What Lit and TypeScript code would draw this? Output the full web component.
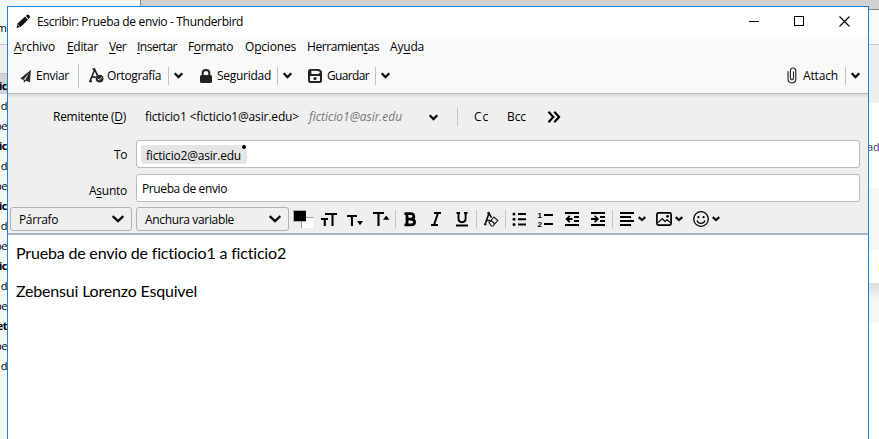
import { LitElement, html, svg, css } from "lit";
import { customElement, property } from "lit/decorators.js";

/* Text run whose tracking is adjusted to occupy a given width. */
@customElement("fit-text")
class FitText extends LitElement {
  @property({ type: Number }) w = 0;
  static styles = css`
    :host { display: inline-block; white-space: pre; }
    .run { display: inline-block; }
  `;
  firstUpdated() {
    const run = this.renderRoot.querySelector(".run") as HTMLElement;
    const n = (this.textContent || "").length;
    if (!this.w || !n) return;
    const natural = run.getBoundingClientRect().width;
    run.style.letterSpacing = (this.w - natural) / n + "px";
  }
  render() {
    return html`<span class="run"><slot></slot></span>`;
  }
}

const t = (w: number, a: string, u = "", b = "") =>
  html`<fit-text w=${w}>${a}${u ? html`<u>${u}</u>` : ""}${b}</fit-text>`;

const icon = (x: number, y: number, w: number, h: number, body: unknown) =>
  html`<svg class="icon" width=${w} height=${h} viewBox="${x} ${y} ${w} ${h}">${body}</svg>`;

const chevron = (w = 9, h = 7, s = 2.2) =>
  html`<svg class="icon" width=${w} height=${h} viewBox="0 0 ${w} ${h}">
    <path d="M.7 1.2 L${w / 2} ${h - 1.9} L${w - 0.7} 1.2" fill="none" stroke="#0c0c0c" stroke-width=${s} /></svg>`;

const pencil = icon(0, 0, 15, 15, svg`
  <path d="M0.5 14 L1.6 9.6 L9 2.6 L12 5.8 L4.8 12.8 Z" fill="#111"/>
  <path d="M9.8 1.9 L11.2 .7 Q12.2 .1 13.2 1.2 Q14.5 2.5 13.8 3.6 L12.7 5Z" fill="#111"/>
  <path d="M1.9 10.9 L3.7 12.5" stroke="#fff" stroke-width=".7"/>`);
const send = icon(0, 0, 12, 14, svg`
  <path d="M11 .8 L.2 9.6 L3.4 11 L8.6 4.6 L5 11.4 L9.9 13.2 Z" fill="#2b2b2b"/>
  <path d="M3.6 10.3 L3.9 13.8 L6.2 11.6" fill="#2b2b2b"/>`);
const spell = icon(0, 0, 16, 15, svg`
  <path d="M1 13.2 L5.7 1.5 L8.6 7.6 M2.6 9.2 H6.8 M3.6 1.2 H6.2 M.2 13.3 H3" fill="none" stroke="#222" stroke-width="1.7"/>
  <circle cx="10.6" cy="10.6" r="3.9" fill="#2b2b2b"/>
  <path d="M8.6 10.7 L10.1 12.1 L12.9 9.2" fill="none" stroke="#ddd" stroke-width="1"/>`);
const lock = icon(0, 0, 12, 14, svg`
  <path d="M2.7 7 V4 Q2.7 1.1 6 1.1 Q9.3 1.1 9.3 4 V7" fill="none" stroke="#222" stroke-width="2"/>
  <rect x="0" y="6" width="12" height="8" rx="1.5" fill="#222"/>`);
const save = icon(0, 0, 14, 14, svg`
  <path d="M2.3 1 H9.8 Q13 1.2 13 4 V11.7 Q13 13 11.7 13 H2.3 Q1 13 1 11.7 V2.3 Q1 1 2.3 1Z" fill="#f9f9f9" stroke="#222" stroke-width="2"/>
  <path d="M1 1 H3.5 V5 H11 V4 H13 V7 H1Z" fill="#222"/><rect x="3.6" y="1.8" width="5" height="2.3" fill="#f9f9f9"/>
  <circle cx="7" cy="9.6" r="1.6" fill="#222"/>`);
const clip = icon(0, 0, 10, 17, svg`
  <path d="M6.5 4.4 V10.8 Q6.5 12.7 5 12.7 Q3.4 12.7 3.4 10.8 V4.2 Q3.4 1 6 1 Q8.8 1 8.8 4.2 V11.6 Q8.8 15.9 5 15.9 Q1 15.9 1 11.6 V4.2" fill="none" stroke="#2b2b2b" stroke-width="1.2"/>`);

const swatch = icon(293, 209, 21, 20, svg`
  <rect x="301" y="217" width="12" height="11" fill="#fff"/><path d="M306 217.5 H313.5 M301.5 221 V228" stroke="#999"/>
  <rect x="293" y="210" width="13" height="12" fill="#aaa"/><rect x="294" y="211" width="12" height="10" fill="#000"/>`);
const tt = icon(320, 209, 18, 20, svg`
  <path d="M325 214 H337 M332.5 214 V226 M321 219 H328 M324.8 219 V226" stroke="#000" stroke-width="2.1" fill="none"/>`);
const tDown = icon(346, 209, 18, 20, svg`
  <path d="M347 216 H357 M352 216 V226" stroke="#000" stroke-width="2.1"/><path d="M357 221 H363 L360 225.3Z"/>`);
const tUp = icon(372, 209, 18, 20, svg`
  <path d="M373 213 H384 M378.5 213 V226" stroke="#000" stroke-width="2.1"/><path d="M383 219.8 H389.4 L386.2 215.5Z"/>`);
const bold = icon(403, 209, 14, 20, svg`
  <path d="M404.5 213.6 H410.5 Q413.8 213.6 413.8 216.4 Q413.8 219.2 410.5 219.2 H407 M410.5 219.2 Q414.6 219.2 414.6 222.2 Q414.6 224.8 411 224.8 H404.5 M407 213 V225" fill="none" stroke="#000" stroke-width="2.8"/>`);
const italic = icon(430, 209, 12, 20, svg`
  <path d="M434 213 H441 M431 225 H438 M438 213 L434 225" fill="none" stroke="#000" stroke-width="2"/>`);
const under = icon(455, 209, 14, 20, svg`
  <path d="M458.5 212 V218.5 Q458.5 222.2 462 222.2 Q465.6 222.2 465.6 218.5 V212 M456.5 213 H460 M464 213 H467.5" fill="none" stroke="#000" stroke-width="1.9"/><path d="M456 225.5 H468" stroke="#000" stroke-width="2"/>`);
const clear = icon(483, 209, 17, 20, svg`
  <path d="M485 224.5 L489 213.3 L491.5 217.6 M486 220.5 H490 M487.2 213 H490 M484 224.5 H486.5" fill="none" stroke="#111" stroke-width="1.7"/>
  <path d="M489 222.6 L494 217 L497.8 220.5 L492.8 226 H491.4Z M491 220.5 L495 224" fill="#efefef" stroke="#111" stroke-width="1.1"/>`);
const bullets = icon(512, 209, 15, 20, svg`
  <g fill="#000"><circle cx="514" cy="214" r="1.5"/><circle cx="514" cy="219.2" r="1.5"/><circle cx="514" cy="224.4" r="1.5"/></g>
  <path d="M518 214 H526 M518 219.2 H526 M518 224.5 H526" stroke="#000" stroke-width="2"/>`);
const numbers = icon(538, 209, 16, 20, svg`
  <text x="537.6" y="218" class="digit">1</text><text x="537.6" y="227" class="digit">2</text>
  <path d="M544 215 H553 M544 224 H553" stroke="#000" stroke-width="2"/>`);
const outdent = icon(565, 209, 15, 20, svg`
  <path d="M565 213 H579 M574 217 H579 M574 221 H579 M565 225 H579" stroke="#000" stroke-width="1.8"/>
  <path d="M566.5 219 H572.5 M569.8 215.8 L566.6 219 L569.8 222.2" fill="none" stroke="#000" stroke-width="1.8"/>`);
const indent = icon(591, 209, 15, 20, svg`
  <path d="M591 213 H605 M600 217 H605 M600 221 H605 M591 225 H605" stroke="#000" stroke-width="1.8"/>
  <path d="M591 219 H597.5 M594.6 215.8 L597.8 219 L594.6 222.2" fill="none" stroke="#000" stroke-width="1.8"/>`);
const align = icon(620, 209, 14, 20, svg`
  <path d="M620 213 H634 M620 217 H631 M620 221 H634 M620 225 H631" stroke="#000" stroke-width="2"/>`);
const image = icon(656, 209, 16, 20, svg`
  <rect x="656.9" y="212.9" width="14.2" height="12.2" rx="1.6" fill="none" stroke="#000" stroke-width="1.7"/>
  <path d="M658 222.6 L662.2 218.6 L665 221.4 L667 219.8 L670.4 222.6" fill="none" stroke="#000" stroke-width="1.1"/><circle cx="667.6" cy="216.3" r="1.4"/>`);
const smile = icon(693, 209, 16, 20, svg`
  <circle cx="701" cy="219" r="7.3" fill="none" stroke="#000" stroke-width="1.3"/>
  <circle cx="698.4" cy="217.2" r="1.1"/><circle cx="703.6" cy="217.2" r="1.1"/>
  <path d="M697 220.5 Q698.2 223.4 701 223.4 Q703.8 223.4 705 220.5" fill="none" stroke="#000" stroke-width="1.3"/>`);
const more = icon(0, 0, 14, 12, svg`
  <path d="M1.5 .8 L6.3 6 L1.5 11.2 M7.3 .8 L12.1 6 L7.3 11.2" fill="none" stroke="#000" stroke-width="2.1"/>`);

const sep = html`<i class="sep"></i>`;
const list = ["tic", "d", "be", "tic", "d", "be", "tic", "d", "be", "tic", "d", "be", "et", "be", "d"];

@customElement("app-root")
class AppRoot extends LitElement {
  static styles = css`
    :host {
      display: grid; grid-template-columns: 7px 862px 10px; width: 879px; height: 439px;
      overflow: hidden; background: #fff; color: #000;
      font: 12px/16px "Open Sans", "Noto Sans", sans-serif;
    }
    * { box-sizing: border-box; }
    u { text-decoration: underline; text-decoration-thickness: 1px; text-underline-offset: 1.5px; }
    .icon { display: block; flex: none; overflow: visible; }
    .digit { font: bold 8px "Liberation Sans", sans-serif; }

    .left { background: #f9f9f9; overflow: hidden; display: flex; flex-direction: column; }
    .left .tab { height: 45px; padding-top: 20px; border-bottom: 1px solid #c8c8c8; flex: none; display: flex; justify-content: flex-end; font-size: 11px; }
    .left .bar { height: 29px; background: #efefef; border-bottom: 1px solid #c4c4c4; flex: none; }
    .row { height: 20px; line-height: 23px; flex: none; display: flex; justify-content: flex-end; font-size: 11px; letter-spacing: -0.5px; }
    .row.bold { font-weight: 700; }
    .row.first { background: #d2d2d2; }

    .middle { display: flex; flex-direction: column; height: 439px; }
    .behind { height: 6px; flex: none; background: #d0d0d0; display: flex; }
    .behind b { width: 134px; background: #f9f9f9; border-right: 1px solid #888; }
    .window { height: 440px; flex: none; border: 1px solid #1883d7; background: #fff; }
    .title { height: 30px; display: grid; grid-template-columns: 21px 711px 45px 46px 20px; padding-left: 8px; align-items: center; }
    .title .icon { margin-top: -1px; }
    .chrome { height: 57px; background: #f9f9f9; border-bottom: 1px solid #b9b9b9; }
    .menu { height: 20px; display: grid; grid-template-columns: 53px 42px 28px 51px 57px 62px 83px 40px; padding-left: 6px; align-items: center; }
    .tools { height: 37px; display: grid; align-items: center; padding-left: 12px;
      grid-template-columns: 16px 42px 11px 18px 61px 6px 26px 17px 60px 6px 25px 19px 48px 6px 406px 16px 42px 6px 12px; }
    .tools fit-text { margin-top: 1px; }
    .sep { display: block; width: 1px; height: 18px; background: #c2c2c2; }
    .tools .tall { height: 24px; }

    .head { height: 141px; background: linear-gradient(#d9d9d9, #efefef 4px); border-bottom: 2px solid #a9b4c8; display: flex; flex-direction: column; }
    .from { height: 46px; display: grid; align-items: center; padding-left: 45px;
      grid-template-columns: 92px 164px 120px 28px 17px 33px 40px 20px; }
    .alias { color: #777; font-style: italic; }
    .field { display: grid; grid-template-columns: 119px 724px; column-gap: 9px; height: 28px; margin-bottom: 6px; align-items: center; }
    .field .label { text-align: right; padding-top: 1px; }
    .field .label.low { padding-top: 5px; }
    .box { height: 28px; background: #fff; border: 1px solid #bbb; border-radius: 3px; display: flex; align-items: center; padding-left: 5px; }
    .box fit-text { margin-top: 2px; }
    .box.to { padding-left: 4px; }
    .chip { position: relative; width: 106px; height: 19px; margin-top: 1px; border-radius: 3px; background: #e5e5e5; padding-left: 5px; display: flex; align-items: center; }
    .dot { position: absolute; right: 0; top: -1px; width: 6px; height: 6px; border-radius: 3px; border: 1px solid #fff; background: #000; }
    .format { height: 24px; display: grid; align-items: center; padding-left: 2px; margin-top: -1px;
      grid-template-columns: 126px 157px 27px 26px 26px 23px 8px 27px 25px 21px 7px 22px 7px 26px 27px 26px 21px 8px 18px 18px 19px 18px 19px 10px; }
    .select { height: 24px; border: 1px solid #b2b2b2; border-radius: 3px; display: flex; align-items: center; justify-content: space-between; padding: 0 7px 0 8px; background: #efefef; }
    .select fit-text { margin-top: 2px; }
    .s1 { width: 122px; }
    .s2 { width: 153px; }
    .message { padding: 8px 8px; font: 16px/20px Lato, "Open Sans", sans-serif; }
    .message p { margin: 0 0 18px; height: 20px; }

    .right { display: flex; flex-direction: column; overflow: hidden; }
    .r1 { height: 10px; background: #d0d0d0; border-bottom: 1px solid #888; flex: none; }
    .r2 { height: 35px; background: #f9f9f9; border-bottom: 1px solid #c8c8c8; flex: none; }
    .r3 { height: 58px; background: #efefef; flex: none; }
    .r4 { height: 85px; padding-top: 36px; color: #40345c; font-size: 11px; flex: none; margin-left: -2px; }
    .r5 { height: 62px; background: #f6f6f6; flex: none; }
    .r6 { height: 33px; flex: none; display: flex; align-items: center; justify-content: flex-end; }
    .r6 i { width: 1px; height: 8px; background: #f4ff9a; }
    .r7 { height: 40px; background: linear-gradient(#dcdcdc, #f6f6f6 16px); flex: none; }
  `;

  render() {
    return html`
      <div class="left">
        <div class="tab">m</div><div class="bar"></div>
        ${list.map((s, i) => html`<div class="row ${s === "tic" || s === "et" ? "bold" : ""} ${i === 0 ? "first" : ""}">${s}</div>`)}
      </div>
      <div class="middle">
        <div class="behind"><b></b></div>
        <div class="window">
          <div class="title">
            ${pencil}${t(206, "Escribir: Prueba de envio - Thunderbird")}
            ${icon(0, 0, 11, 11, svg`<path d="M1 5.5 H11" stroke="#000"/>`)}
            ${icon(0, 0, 11, 11, svg`<rect x="1.5" y=".5" width="9" height="9" fill="none" stroke="#000"/>`)}
            ${icon(0, 0, 11, 11, svg`<path d="M.5 .5 L10.5 10.5 M10.5 .5 L.5 10.5" stroke="#000" stroke-width="1.1"/>`)}
          </div>
          <div class="chrome">
            <div class="menu">
              ${t(41, "", "A", "rchivo")}${t(31, "", "E", "ditar")}${t(17, "", "V", "er")}${t(40, "", "I", "nsertar")}
              ${t(45, "F", "o", "rmato")}${t(51, "O", "p", "ciones")}${t(72, "Herramien", "t", "as")}${t(34, "Ay", "u", "da")}
            </div>
            <div class="tools">
              ${send}${t(33, "Enviar")}<i class="sep tall"></i>
              ${spell}${t(54, "Ortografía")}${sep}${chevron()}
              ${lock}${t(54, "Seguridad")}${sep}${chevron()}
              ${save}${t(42, "Guardar")}${sep}${chevron()}
              ${clip}${t(35, "Attach")}${sep}${chevron()}
            </div>
          </div>
          <div class="head">
            <div class="from">
              ${t(73, "Remitente (", "D", ")")}${t(154, "ficticio1 <ficticio1@asir.edu>")}
              <span class="alias">${t(93, "ficticio1@asir.edu")}</span>${chevron()}<i class="sep"></i>
              ${t(15, "Cc")}${t(19, "Bcc")}${more}
            </div>
            <div class="field">
              <span class="label">${t(13, "To")}</span>
              <div class="box to"><div class="chip">${t(95, "ficticio2@asir.edu")}<i class="dot"></i></div></div>
            </div>
            <div class="field">
              <span class="label low">${t(38, "A", "s", "unto")}</span>
              <div class="box">${t(85, "Prueba de envio")}</div>
            </div>
            <div class="format">
              <div class="select s1">${t(39, "Párrafo")}${chevron(12, 8, 2.3)}</div>
              <div class="select s2">${t(89, "Anchura variable")}${chevron(12, 8, 2.3)}</div>
              ${swatch}${tt}${tDown}${tUp}${sep}${bold}${italic}${under}${sep}${clear}${sep}
              ${bullets}${numbers}${outdent}${indent}${sep}${align}${chevron(8, 6)}${image}${chevron(8, 6)}${smile}${chevron(8, 6)}
            </div>
          </div>
          <div class="message">
            <p>${t(270, "Prueba de envio de fictiocio1 a ficticio2")}</p>
            <p>${t(181, "Zebensui Lorenzo Esquivel")}</p>
          </div>
        </div>
      </div>
      <div class="right">
        <div class="r1"></div><div class="r2"></div><div class="r3"></div><div class="r4">ad</div>
        <div class="r5"></div><div class="r6"><i></i></div><div class="r7"></div>
      </div>
    `;
  }
}
